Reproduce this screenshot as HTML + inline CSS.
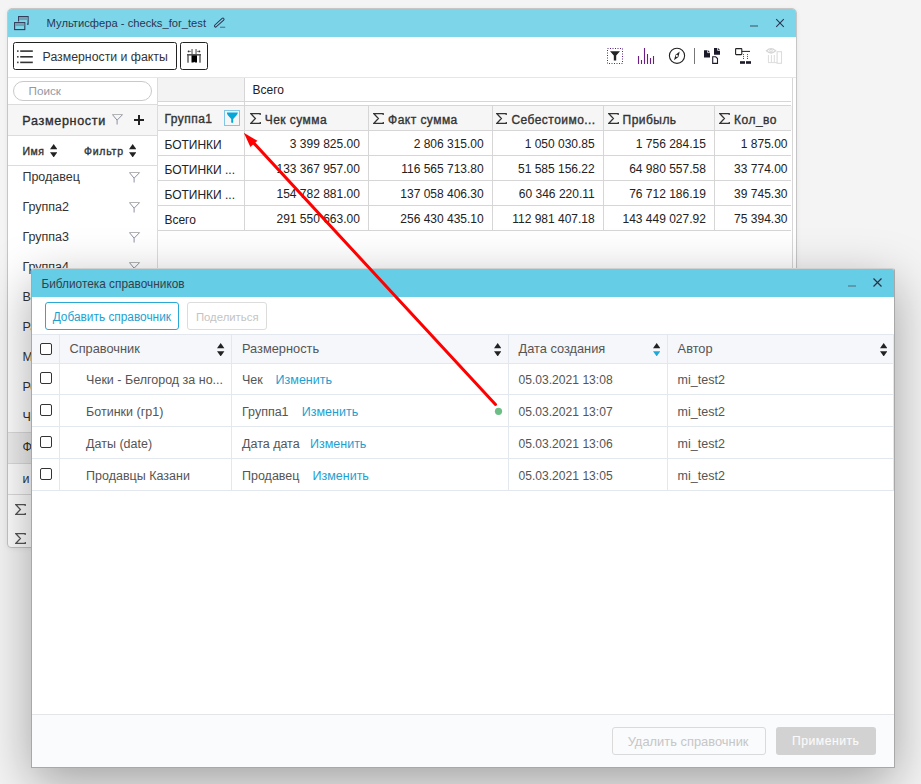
<!DOCTYPE html>
<html><head><meta charset="utf-8">
<style>
*{box-sizing:border-box;margin:0;padding:0}
html,body{width:921px;height:784px;overflow:hidden;background:#f4f4f4;font-family:"Liberation Sans",sans-serif;color:#333;position:relative}
.a{position:absolute}
.t{position:absolute;white-space:nowrap;line-height:1}
</style></head><body>
<div class="a" style="left:7px;top:8px;width:790px;height:540px;border:1px solid #c6c6c6;border-radius:5px 5px 4px 4px;background:#fff;box-shadow:0 1px 5px rgba(0,0,0,0.06)"></div>
<div class="a" style="left:8px;top:9px;width:788px;height:28px;background:#7dd5ea;border-radius:4px 4px 0 0"></div>
<svg class="a" style="left:13px;top:15px" width="17" height="16" viewBox="0 0 17 16"><path d="M5.6 6.5V1.6H15.1V9.1H13.9" fill="none" stroke="#333b58" stroke-width="1.1"/><rect x="6.1" y="2.1" width="8.5" height="3" fill="#6fa3b3"/><rect x="1.6" y="7.6" width="10.2" height="7" fill="#7dd5ea" stroke="#333b58" stroke-width="1.1"/><rect x="2.1" y="8.1" width="9.2" height="3" fill="#6fa3b3"/></svg>
<div class="t" style="left:46.60px;top:18.12px;font-size:11.2px;color:#2b3550;font-weight:normal;">Мультисфера - checks_for_test</div>
<svg class="a" style="left:212px;top:15px" width="14" height="14" viewBox="0 0 14 14"><path d="M3.6 10.9L10.9 4.3" stroke="#2b3550" stroke-width="3.3" stroke-linecap="round"/><path d="M3.7 10.8L10.9 4.3" stroke="#7dd5ea" stroke-width="1.3" stroke-linecap="round"/><rect x="8" y="11.7" width="5.2" height="1.1" fill="#4f7384"/></svg>
<div class="a" style="left:750px;top:25px;width:8px;height:2px;background:#5b93a3"></div>
<svg class="a" style="left:775px;top:18px" width="10" height="10" viewBox="0 0 10 10"><path d="M1.2 1.2L8.8 8.8M8.8 1.2L1.2 8.8" stroke="#2b3550" stroke-width="1.05"/></svg>
<div class="a" style="left:8px;top:77px;width:788px;height:1px;background:#dfe7ef"></div>
<div class="a" style="left:13px;top:42px;width:164px;height:28px;border:1.1px solid #222;border-radius:2.5px;background:#fff"></div>
<svg class="a" style="left:17px;top:49px" width="16" height="15" viewBox="0 0 16 15"><rect x="0" y="1.3" width="1.6" height="1.6" fill="#444"/><rect x="3.2" y="1.3" width="12.6" height="1.6" fill="#333"/><rect x="0" y="7" width="1.6" height="1.6" fill="#444"/><rect x="3.2" y="7" width="12.6" height="1.6" fill="#333"/><rect x="0" y="12.6" width="1.6" height="1.6" fill="#444"/><rect x="3.2" y="12.6" width="12.6" height="1.6" fill="#333"/></svg>
<div class="t" style="left:42.60px;top:51.19px;font-size:12.3px;color:#333;font-weight:normal;">Размерности и факты</div>
<div class="a" style="left:180px;top:42px;width:28px;height:28px;border:1.1px solid #222;border-radius:2.5px;background:#fff"></div>
<svg class="a" style="left:178px;top:40px" width="32" height="32" viewBox="0 0 32 32"><rect x="9.1" y="14.1" width="1.8" height="8.6" fill="#7a7a7a"/><rect x="21.1" y="14.1" width="1.8" height="8.6" fill="#7a7a7a"/><path d="M13.5 14H19V22.6H17L16.2 21.8L15.4 22.6H13.5Z" fill="#000"/><path d="M9 14H23V15.6H9Z" fill="#555"/><rect x="13.3" y="9" width="1.5" height="5" fill="#888"/><rect x="17.3" y="9" width="1.5" height="5" fill="#888"/><circle cx="10.6" cy="11.4" r="0.9" fill="#222"/><circle cx="21.4" cy="11.4" r="0.9" fill="#222"/><path d="M10.6 11.4H13.3M18.8 11.4H21.4" stroke="#666" stroke-width="0.8"/></svg>
<svg class="a" style="left:606px;top:47px" width="18" height="18" viewBox="0 0 18 18"><rect x="1.5" y="1.5" width="15" height="15" fill="none" stroke="#5a2585" stroke-width="1" stroke-dasharray="1 1.5"/><path d="M4 4.2H14L10.2 8.6V13.6H7.8V8.6Z" fill="#222"/></svg>
<svg class="a" style="left:636px;top:47px" width="20" height="18" viewBox="0 0 20 18"><path d="M2.5 9V17M5.5 13V17M8.5 1V17M11.5 7V17M14.5 11V17M17.5 9V17" stroke="#6b1d86" stroke-width="1.1"/></svg>
<svg class="a" style="left:667px;top:46px" width="20" height="20" viewBox="0 0 20 20"><circle cx="10" cy="9.8" r="7.6" fill="none" stroke="#222" stroke-width="1.1"/><path d="M12.7 5.6L11.4 11L7 14.2L8.6 8.8Z" fill="#222"/><circle cx="9.85" cy="9.9" r="1.05" fill="#fff"/></svg>
<div class="a" style="left:694px;top:48px;width:1px;height:16px;background:#777"></div>
<svg class="a" style="left:703px;top:47px" width="18" height="18" viewBox="0 0 18 18"><path d="M1 3.2H5L7 5.2V10.6H1Z" fill="#1a1a2a"/><path d="M4.6 3.2V5.6H7" fill="none" stroke="#fff" stroke-width="0.8"/><path d="M11 1H15L17 3V7.8H11Z" fill="#1a1a2a"/><path d="M14.6 1V3.4H17" fill="none" stroke="#fff" stroke-width="0.8"/><path d="M9.7 9.8H12.7L14.5 11.6V16.4H9.7Z" fill="#fff" stroke="#1a1a2a" stroke-width="1.1"/></svg>
<svg class="a" style="left:734px;top:47px" width="18" height="18" viewBox="0 0 18 18"><rect x="1.6" y="1.6" width="6.2" height="6" rx="0.6" fill="none" stroke="#222" stroke-width="1.1"/><path d="M7.8 4.4H16" stroke="#222" stroke-width="1"/><rect x="9" y="7.1" width="1" height="1" fill="#7a2a9a"/><rect x="9" y="9.1" width="1" height="1" fill="#7a2a9a"/><rect x="9" y="11" width="1" height="1" fill="#7a2a9a"/><rect x="13" y="7.1" width="1" height="1" fill="#7a2a9a"/><rect x="13" y="9.1" width="1" height="1" fill="#7a2a9a"/><rect x="13" y="11" width="1" height="1" fill="#7a2a9a"/><rect x="6" y="14.2" width="5" height="2.6" fill="#1a1a2a"/><rect x="12" y="14.2" width="5" height="2.6" fill="#1a1a2a"/></svg>
<svg class="a" style="left:765px;top:47px" width="18" height="18" viewBox="0 0 18 18"><path d="M1.5 3.8Q6 -0.6 10.6 3.8Q6 8.2 1.5 3.8Z" fill="none" stroke="#d6d6d6" stroke-width="1.3"/><circle cx="6" cy="3.8" r="1.3" fill="none" stroke="#d6d6d6" stroke-width="1"/><path d="M3.4 8V15.2M6.4 8V15.2M9.3 8V15.2" stroke="#dcdcdc" stroke-width="1"/><path d="M3 15.6H12" stroke="#dcdcdc" stroke-width="1"/><rect x="12.1" y="4.7" width="4.4" height="11.6" fill="none" stroke="#dcdcdc" stroke-width="1.1"/></svg>
<div class="a" style="left:157px;top:78px;width:1px;height:468px;background:#dcdcdc"></div>
<div class="a" style="left:13px;top:81px;width:139px;height:20px;border:1px solid #c9c9c9;border-radius:10px;background:#fff"></div>
<div class="t" style="left:28.60px;top:85.30px;font-size:11.7px;color:#9298a6;font-weight:normal;">Поиск</div>
<div class="a" style="left:8px;top:104px;width:149px;height:32px;background:#f6f6f6;border-top:1px solid #dcdcdc;border-bottom:1px solid #dcdcdc"></div>
<div class="t" style="left:22.30px;top:114.83px;font-size:12.6px;color:#2d2d2d;font-weight:normal;letter-spacing:0.66px;-webkit-text-stroke:0.35px #2d2d2d;">Размерности</div>
<svg class="a" style="left:112.3px;top:114px" width="12" height="12" viewBox="0 0 12 12"><path d="M0.3 0.5H10.7" stroke="#b4b4b4" stroke-width="1"/><path d="M0.6 0.8L5.1 6.2V10.5M10.4 0.8L5.1 6.2" fill="none" stroke="#8b8fa3" stroke-width="1"/></svg>
<div class="a" style="left:134px;top:119.2px;width:10.4px;height:1.8px;background:#222"></div>
<div class="a" style="left:138.2px;top:114.8px;width:1.8px;height:10.4px;background:#222"></div>
<div class="t" style="left:22.40px;top:146.01px;font-size:10.5px;color:#333;font-weight:normal;letter-spacing:0.6px;-webkit-text-stroke:0.35px #333;">Имя</div>
<svg class="a" style="left:50px;top:143.8px" width="7.4" height="13.4" viewBox="0 0 7.4 13.4"><path d="M3.7 0L7.4 5.2H0Z" fill="#222"/><path d="M0 8.2H7.4L3.7 13.4Z" fill="#222"/></svg>
<div class="t" style="left:84.00px;top:146.01px;font-size:10.5px;color:#333;font-weight:normal;letter-spacing:0.75px;-webkit-text-stroke:0.35px #333;">Фильтр</div>
<svg class="a" style="left:129px;top:143.8px" width="7.4" height="13.4" viewBox="0 0 7.4 13.4"><path d="M3.7 0L7.4 5.2H0Z" fill="#222"/><path d="M0 8.2H7.4L3.7 13.4Z" fill="#222"/></svg>
<div class="a" style="left:8px;top:165px;width:149px;height:1px;background:#dcdcdc"></div>
<div class="t" style="left:22.40px;top:171.22px;font-size:12.5px;color:#333;font-weight:normal;">Продавец</div>
<svg class="a" style="left:129px;top:171.70000000000002px" width="12" height="12" viewBox="0 0 12 12"><path d="M0.3 0.5H10.7" stroke="#b4b4b4" stroke-width="1"/><path d="M0.6 0.8L5.1 6.2V10.5M10.4 0.8L5.1 6.2" fill="none" stroke="#8b8fa3" stroke-width="1"/></svg>
<div class="t" style="left:22.40px;top:201.22px;font-size:12.5px;color:#333;font-weight:normal;">Группа2</div>
<svg class="a" style="left:129px;top:201.70000000000002px" width="12" height="12" viewBox="0 0 12 12"><path d="M0.3 0.5H10.7" stroke="#b4b4b4" stroke-width="1"/><path d="M0.6 0.8L5.1 6.2V10.5M10.4 0.8L5.1 6.2" fill="none" stroke="#8b8fa3" stroke-width="1"/></svg>
<div class="t" style="left:22.40px;top:231.22px;font-size:12.5px;color:#333;font-weight:normal;">Группа3</div>
<svg class="a" style="left:129px;top:231.70000000000002px" width="12" height="12" viewBox="0 0 12 12"><path d="M0.3 0.5H10.7" stroke="#b4b4b4" stroke-width="1"/><path d="M0.6 0.8L5.1 6.2V10.5M10.4 0.8L5.1 6.2" fill="none" stroke="#8b8fa3" stroke-width="1"/></svg>
<div class="t" style="left:22.40px;top:261.22px;font-size:12.5px;color:#333;font-weight:normal;">Группа4</div>
<svg class="a" style="left:129px;top:261.7px" width="12" height="12" viewBox="0 0 12 12"><path d="M0.3 0.5H10.7" stroke="#b4b4b4" stroke-width="1"/><path d="M0.6 0.8L5.1 6.2V10.5M10.4 0.8L5.1 6.2" fill="none" stroke="#8b8fa3" stroke-width="1"/></svg>
<div class="t" style="left:22.40px;top:291.22px;font-size:12.5px;color:#333;font-weight:normal;">Вендор</div>
<svg class="a" style="left:129px;top:291.7px" width="12" height="12" viewBox="0 0 12 12"><path d="M0.3 0.5H10.7" stroke="#b4b4b4" stroke-width="1"/><path d="M0.6 0.8L5.1 6.2V10.5M10.4 0.8L5.1 6.2" fill="none" stroke="#8b8fa3" stroke-width="1"/></svg>
<div class="t" style="left:22.40px;top:321.22px;font-size:12.5px;color:#333;font-weight:normal;">Район</div>
<svg class="a" style="left:129px;top:321.7px" width="12" height="12" viewBox="0 0 12 12"><path d="M0.3 0.5H10.7" stroke="#b4b4b4" stroke-width="1"/><path d="M0.6 0.8L5.1 6.2V10.5M10.4 0.8L5.1 6.2" fill="none" stroke="#8b8fa3" stroke-width="1"/></svg>
<div class="t" style="left:22.40px;top:351.22px;font-size:12.5px;color:#333;font-weight:normal;">Магазин</div>
<svg class="a" style="left:129px;top:351.7px" width="12" height="12" viewBox="0 0 12 12"><path d="M0.3 0.5H10.7" stroke="#b4b4b4" stroke-width="1"/><path d="M0.6 0.8L5.1 6.2V10.5M10.4 0.8L5.1 6.2" fill="none" stroke="#8b8fa3" stroke-width="1"/></svg>
<div class="t" style="left:22.40px;top:381.22px;font-size:12.5px;color:#333;font-weight:normal;">Регион</div>
<svg class="a" style="left:129px;top:381.7px" width="12" height="12" viewBox="0 0 12 12"><path d="M0.3 0.5H10.7" stroke="#b4b4b4" stroke-width="1"/><path d="M0.6 0.8L5.1 6.2V10.5M10.4 0.8L5.1 6.2" fill="none" stroke="#8b8fa3" stroke-width="1"/></svg>
<div class="t" style="left:22.40px;top:411.22px;font-size:12.5px;color:#333;font-weight:normal;">Чек</div>
<svg class="a" style="left:129px;top:411.7px" width="12" height="12" viewBox="0 0 12 12"><path d="M0.3 0.5H10.7" stroke="#b4b4b4" stroke-width="1"/><path d="M0.6 0.8L5.1 6.2V10.5M10.4 0.8L5.1 6.2" fill="none" stroke="#8b8fa3" stroke-width="1"/></svg>
<div class="a" style="left:8px;top:432px;width:149px;height:32px;background:#efefef;border-top:1px solid #dcdcdc;border-bottom:1px solid #dcdcdc"></div>
<div class="t" style="left:22.40px;top:441.42px;font-size:12.5px;color:#333;font-weight:normal;">Ф</div>
<div class="t" style="left:22.40px;top:472.92px;font-size:12.5px;color:#333;font-weight:normal;">и</div>
<div class="a" style="left:8px;top:494px;width:149px;height:1px;background:#dcdcdc"></div>
<svg class="a" style="left:15px;top:504px" width="11" height="11" viewBox="0 0 11 11"><path d="M10.2 1.9V0.7H0.9L5.4 5.5L0.9 10.3H10.3V9.1" fill="none" stroke="#555" stroke-width="1.25" stroke-linejoin="miter"/></svg>
<svg class="a" style="left:15px;top:533px" width="11" height="11" viewBox="0 0 11 11"><path d="M10.2 1.9V0.7H0.9L5.4 5.5L0.9 10.3H10.3V9.1" fill="none" stroke="#555" stroke-width="1.25" stroke-linejoin="miter"/></svg>
<div class="a" style="left:158px;top:78px;width:86px;height:23px;background:#f3f3f3"></div>
<div class="a" style="left:158px;top:106px;width:634px;height:24px;background:#f6f6f6"></div>
<div class="a" style="left:158px;top:101px;width:633px;height:1px;background:#d6d6d6"></div>
<div class="a" style="left:158px;top:105px;width:633px;height:1px;background:#d6d6d6"></div>
<div class="a" style="left:158px;top:130px;width:633px;height:1px;background:#d6d6d6"></div>
<div class="a" style="left:158px;top:155px;width:633px;height:1px;background:#d6d6d6"></div>
<div class="a" style="left:158px;top:180px;width:633px;height:1px;background:#d6d6d6"></div>
<div class="a" style="left:158px;top:205px;width:633px;height:1px;background:#d6d6d6"></div>
<div class="a" style="left:158px;top:230px;width:633px;height:1px;background:#d6d6d6"></div>
<div class="a" style="left:244px;top:78px;width:1px;height:153px;background:#d6d6d6"></div>
<div class="a" style="left:368px;top:105px;width:1px;height:126px;background:#d6d6d6"></div>
<div class="a" style="left:492px;top:105px;width:1px;height:126px;background:#d6d6d6"></div>
<div class="a" style="left:603px;top:105px;width:1px;height:126px;background:#d6d6d6"></div>
<div class="a" style="left:714px;top:105px;width:1px;height:126px;background:#d6d6d6"></div>
<div class="a" style="left:792px;top:78px;width:1px;height:469px;background:#d6d6d6"></div>
<div class="t" style="left:252.50px;top:84.44px;font-size:12px;color:#222;font-weight:normal;">Всего</div>
<div class="t" style="left:164.40px;top:113.04px;font-size:12px;color:#333;font-weight:normal;letter-spacing:0.48px;-webkit-text-stroke:0.35px #333;">Группа1</div>
<div class="a" style="left:224px;top:110px;width:16px;height:16px;border:1px solid #82c6e6"></div>
<svg class="a" style="left:226px;top:112px" width="13" height="13" viewBox="0 0 13 13"><path d="M0.9 0.6H11.8Q11.9 1.9 10.6 3.3L7.2 6.9V10.6Q6.2 11.3 5.2 10.6V6.9L1.9 3.3Q0.7 1.9 0.9 0.6Z" fill="#05a7d8"/></svg>
<svg class="a" style="left:249.6px;top:113px" width="11" height="11" viewBox="0 0 11 11"><path d="M10.2 1.9V0.7H0.9L5.4 5.5L0.9 10.3H10.3V9.1" fill="none" stroke="#333" stroke-width="1.25" stroke-linejoin="miter"/></svg>
<div class="t" style="left:264.70px;top:113.74px;font-size:12px;color:#333;font-weight:normal;letter-spacing:0.46px;-webkit-text-stroke:0.35px #333;">Чек сумма</div>
<svg class="a" style="left:373px;top:113px" width="11" height="11" viewBox="0 0 11 11"><path d="M10.2 1.9V0.7H0.9L5.4 5.5L0.9 10.3H10.3V9.1" fill="none" stroke="#333" stroke-width="1.25" stroke-linejoin="miter"/></svg>
<div class="t" style="left:388.10px;top:113.74px;font-size:12px;color:#333;font-weight:normal;letter-spacing:0.46px;-webkit-text-stroke:0.35px #333;">Факт сумма</div>
<svg class="a" style="left:496.3px;top:113px" width="11" height="11" viewBox="0 0 11 11"><path d="M10.2 1.9V0.7H0.9L5.4 5.5L0.9 10.3H10.3V9.1" fill="none" stroke="#333" stroke-width="1.25" stroke-linejoin="miter"/></svg>
<div class="t" style="left:511.40px;top:113.74px;font-size:12px;color:#333;font-weight:normal;letter-spacing:0.46px;-webkit-text-stroke:0.35px #333;">Себестоимо...</div>
<svg class="a" style="left:607.5px;top:113px" width="11" height="11" viewBox="0 0 11 11"><path d="M10.2 1.9V0.7H0.9L5.4 5.5L0.9 10.3H10.3V9.1" fill="none" stroke="#333" stroke-width="1.25" stroke-linejoin="miter"/></svg>
<div class="t" style="left:622.60px;top:113.74px;font-size:12px;color:#333;font-weight:normal;letter-spacing:0.46px;-webkit-text-stroke:0.35px #333;">Прибыль</div>
<svg class="a" style="left:719px;top:113px" width="11" height="11" viewBox="0 0 11 11"><path d="M10.2 1.9V0.7H0.9L5.4 5.5L0.9 10.3H10.3V9.1" fill="none" stroke="#333" stroke-width="1.25" stroke-linejoin="miter"/></svg>
<div class="t" style="left:734.10px;top:113.74px;font-size:12px;color:#333;font-weight:normal;letter-spacing:0.46px;-webkit-text-stroke:0.35px #333;">Кол_во</div>
<div class="t" style="left:164.40px;top:138.54px;font-size:12px;color:#222;font-weight:normal;">БОТИНКИ</div>
<div class="t" style="right:561.10px;top:137.84px;font-size:12px;color:#222;font-weight:normal;">3 399 825.00</div>
<div class="t" style="right:437.30px;top:137.84px;font-size:12px;color:#222;font-weight:normal;">2 806 315.00</div>
<div class="t" style="right:326.30px;top:137.84px;font-size:12px;color:#222;font-weight:normal;">1 050 030.85</div>
<div class="t" style="right:215.10px;top:137.84px;font-size:12px;color:#222;font-weight:normal;">1 756 284.15</div>
<div class="t" style="right:133.50px;top:137.84px;font-size:12px;color:#222;font-weight:normal;">1 875.00</div>
<div class="t" style="left:164.40px;top:163.54px;font-size:12px;color:#222;font-weight:normal;">БОТИНКИ ...</div>
<div class="t" style="right:561.10px;top:162.84px;font-size:12px;color:#222;font-weight:normal;">133 367 957.00</div>
<div class="t" style="right:437.30px;top:162.84px;font-size:12px;color:#222;font-weight:normal;">116 565 713.80</div>
<div class="t" style="right:326.30px;top:162.84px;font-size:12px;color:#222;font-weight:normal;">51 585 156.22</div>
<div class="t" style="right:215.10px;top:162.84px;font-size:12px;color:#222;font-weight:normal;">64 980 557.58</div>
<div class="t" style="right:133.50px;top:162.84px;font-size:12px;color:#222;font-weight:normal;">33 774.00</div>
<div class="t" style="left:164.40px;top:188.54px;font-size:12px;color:#222;font-weight:normal;">БОТИНКИ ...</div>
<div class="t" style="right:561.10px;top:187.84px;font-size:12px;color:#222;font-weight:normal;">154 782 881.00</div>
<div class="t" style="right:437.30px;top:187.84px;font-size:12px;color:#222;font-weight:normal;">137 058 406.30</div>
<div class="t" style="right:326.30px;top:187.84px;font-size:12px;color:#222;font-weight:normal;">60 346 220.11</div>
<div class="t" style="right:215.10px;top:187.84px;font-size:12px;color:#222;font-weight:normal;">76 712 186.19</div>
<div class="t" style="right:133.50px;top:187.84px;font-size:12px;color:#222;font-weight:normal;">39 745.30</div>
<div class="t" style="left:164.40px;top:213.54px;font-size:12px;color:#222;font-weight:normal;">Всего</div>
<div class="t" style="right:561.10px;top:212.84px;font-size:12px;color:#222;font-weight:normal;">291 550 663.00</div>
<div class="t" style="right:437.30px;top:212.84px;font-size:12px;color:#222;font-weight:normal;">256 430 435.10</div>
<div class="t" style="right:326.30px;top:212.84px;font-size:12px;color:#222;font-weight:normal;">112 981 407.18</div>
<div class="t" style="right:215.10px;top:212.84px;font-size:12px;color:#222;font-weight:normal;">143 449 027.92</div>
<div class="t" style="right:133.50px;top:212.84px;font-size:12px;color:#222;font-weight:normal;">75 394.30</div>
<div class="a" style="left:31px;top:268px;width:864px;height:500px;border:1px solid #a8a8a8;border-top:1px solid #d0d0d0;border-radius:3px 3px 0 0;background:#fff;box-shadow:0 15px 50px rgba(0,0,0,0.34)"></div>
<div class="a" style="left:32px;top:269px;width:862px;height:28px;background:#66cde6;border-radius:2px 2px 0 0"></div>
<div class="t" style="left:41.40px;top:278.87px;font-size:11.85px;color:#34404c;font-weight:normal;">Библиотека справочников</div>
<div class="a" style="left:847.5px;top:285px;width:8px;height:2px;background:#5a9cae"></div>
<svg class="a" style="left:873px;top:278px" width="9" height="9" viewBox="0 0 9 9"><path d="M0.5 0.5L8.5 8.5M8.5 0.5L0.5 8.5" stroke="#2a3242" stroke-width="1.2"/></svg>
<div class="a" style="left:45px;top:302px;width:134px;height:28px;border:1px solid #29a9d6;border-radius:3px"></div>
<div class="t" style="left:52.70px;top:311.56px;font-size:11.86px;color:#1e9fd0;font-weight:normal;">Добавить справочник</div>
<div class="a" style="left:187px;top:302px;width:80px;height:28px;border:1px solid #dcdcdc;border-radius:3px"></div>
<div class="t" style="left:195.90px;top:311.99px;font-size:11.35px;color:#c4c4c4;font-weight:normal;">Поделиться</div>
<div class="a" style="left:32px;top:334px;width:862px;height:29px;background:#f5f7fb"></div>
<div class="a" style="left:32px;top:334px;width:862px;height:1px;background:#e3e7ee"></div>
<div class="a" style="left:32px;top:363px;width:862px;height:1px;background:#e3e7ee"></div>
<div class="a" style="left:32px;top:394px;width:862px;height:1px;background:#e3e7ee"></div>
<div class="a" style="left:32px;top:426px;width:862px;height:1px;background:#e3e7ee"></div>
<div class="a" style="left:32px;top:458px;width:862px;height:1px;background:#e3e7ee"></div>
<div class="a" style="left:32px;top:490px;width:862px;height:1px;background:#e3e7ee"></div>
<div class="a" style="left:59px;top:334px;width:1px;height:157px;background:#e3e7ee"></div>
<div class="a" style="left:231px;top:334px;width:1px;height:157px;background:#e3e7ee"></div>
<div class="a" style="left:508px;top:334px;width:1px;height:157px;background:#e3e7ee"></div>
<div class="a" style="left:667px;top:334px;width:1px;height:157px;background:#e3e7ee"></div>
<div class="a" style="left:893px;top:334px;width:1px;height:157px;background:#e3e7ee"></div>
<div class="a" style="left:39.7px;top:342.8px;width:12.5px;height:12.5px;border:1.5px solid #333;border-radius:2px;background:#fff"></div>
<div class="t" style="left:69.40px;top:342.76px;font-size:12.8px;color:#555;font-weight:normal;">Справочник</div>
<svg class="a" style="left:217.3px;top:342.7px" width="7.4" height="13.4" viewBox="0 0 7.4 13.4"><path d="M3.7 0L7.4 5.2H0Z" fill="#222"/><path d="M0 8.2H7.4L3.7 13.4Z" fill="#222"/></svg>
<div class="t" style="left:242.00px;top:342.76px;font-size:12.8px;color:#555;font-weight:normal;">Размерность</div>
<svg class="a" style="left:494px;top:342.7px" width="7.4" height="13.4" viewBox="0 0 7.4 13.4"><path d="M3.7 0L7.4 5.2H0Z" fill="#222"/><path d="M0 8.2H7.4L3.7 13.4Z" fill="#222"/></svg>
<div class="t" style="left:518.50px;top:342.76px;font-size:12.8px;color:#555;font-weight:normal;">Дата создания</div>
<svg class="a" style="left:653px;top:342.7px" width="7.4" height="13.4" viewBox="0 0 7.4 13.4"><path d="M3.7 0L7.4 5.2H0Z" fill="#222"/><path d="M0 8.2H7.4L3.7 13.4Z" fill="#1ea8d8"/></svg>
<div class="t" style="left:677.60px;top:342.76px;font-size:12.8px;color:#555;font-weight:normal;">Автор</div>
<svg class="a" style="left:880px;top:342.7px" width="7.4" height="13.4" viewBox="0 0 7.4 13.4"><path d="M3.7 0L7.4 5.2H0Z" fill="#222"/><path d="M0 8.2H7.4L3.7 13.4Z" fill="#222"/></svg>
<div class="a" style="left:39.7px;top:371.8px;width:12.5px;height:12.5px;border:1.5px solid #333;border-radius:2px;background:#fff"></div>
<div class="t" style="left:86.10px;top:373.72px;font-size:12.5px;color:#555;font-weight:normal;">Чеки - Белгород за но...</div>
<div class="t" style="left:242.00px;top:373.72px;font-size:12.5px;color:#555;font-weight:normal;">Чек</div>
<div class="t" style="left:275.60px;top:373.72px;font-size:12.5px;color:#1e9fd0;font-weight:normal;">Изменить</div>
<div class="t" style="left:518.50px;top:374.06px;font-size:12.1px;color:#555;font-weight:normal;">05.03.2021 13:08</div>
<div class="t" style="left:677.60px;top:373.72px;font-size:12.5px;color:#555;font-weight:normal;">mi_test2</div>
<div class="a" style="left:39.7px;top:403.8px;width:12.5px;height:12.5px;border:1.5px solid #333;border-radius:2px;background:#fff"></div>
<div class="t" style="left:86.10px;top:405.72px;font-size:12.5px;color:#555;font-weight:normal;">Ботинки (гр1)</div>
<div class="t" style="left:242.00px;top:405.72px;font-size:12.5px;color:#555;font-weight:normal;">Группа1</div>
<div class="t" style="left:301.80px;top:405.72px;font-size:12.5px;color:#1e9fd0;font-weight:normal;">Изменить</div>
<div class="t" style="left:518.50px;top:406.06px;font-size:12.1px;color:#555;font-weight:normal;">05.03.2021 13:07</div>
<div class="t" style="left:677.60px;top:405.72px;font-size:12.5px;color:#555;font-weight:normal;">mi_test2</div>
<div class="a" style="left:39.7px;top:435.8px;width:12.5px;height:12.5px;border:1.5px solid #333;border-radius:2px;background:#fff"></div>
<div class="t" style="left:86.10px;top:437.72px;font-size:12.5px;color:#555;font-weight:normal;">Даты (date)</div>
<div class="t" style="left:242.00px;top:437.72px;font-size:12.5px;color:#555;font-weight:normal;">Дата дата</div>
<div class="t" style="left:310.00px;top:437.72px;font-size:12.5px;color:#1e9fd0;font-weight:normal;">Изменить</div>
<div class="t" style="left:518.50px;top:438.06px;font-size:12.1px;color:#555;font-weight:normal;">05.03.2021 13:06</div>
<div class="t" style="left:677.60px;top:437.72px;font-size:12.5px;color:#555;font-weight:normal;">mi_test2</div>
<div class="a" style="left:39.7px;top:467.8px;width:12.5px;height:12.5px;border:1.5px solid #333;border-radius:2px;background:#fff"></div>
<div class="t" style="left:86.10px;top:469.72px;font-size:12.5px;color:#555;font-weight:normal;">Продавцы Казани</div>
<div class="t" style="left:242.00px;top:469.72px;font-size:12.5px;color:#555;font-weight:normal;">Продавец</div>
<div class="t" style="left:312.50px;top:469.72px;font-size:12.5px;color:#1e9fd0;font-weight:normal;">Изменить</div>
<div class="t" style="left:518.50px;top:470.06px;font-size:12.1px;color:#555;font-weight:normal;">05.03.2021 13:05</div>
<div class="t" style="left:677.60px;top:469.72px;font-size:12.5px;color:#555;font-weight:normal;">mi_test2</div>
<div class="a" style="left:32px;top:714px;width:862px;height:53px;background:#fafbfd;border-top:1px solid #e3e5e8"></div>
<div class="a" style="left:612px;top:727px;width:154px;height:28px;border:1px solid #dadada;border-radius:3px;background:#fafbfc"></div>
<div class="t" style="left:627.70px;top:736.08px;font-size:12.9px;color:#c6c6c6;font-weight:normal;">Удалить справочник</div>
<div class="a" style="left:776px;top:727px;width:100px;height:28px;background:#d2d2d2;border-radius:3px"></div>
<div class="t" style="left:792.00px;top:735.07px;font-size:12.2px;color:#fafafa;font-weight:normal;letter-spacing:0.5px;-webkit-text-stroke:0.15px #fafafa;">Применить</div>
<svg class="a" style="left:0px;top:0px" width="921" height="784" viewBox="0 0 921 784"><circle cx="498.5" cy="411.3" r="3.6" fill="#6dbe86"/><path d="M495.5 404.5L250 139" stroke="#ff0000" stroke-width="3" stroke-linecap="round"/><path d="M243.8 132.7L257.4 140.8L250.4 147Z" fill="#ff0000"/></svg>
</body></html>
